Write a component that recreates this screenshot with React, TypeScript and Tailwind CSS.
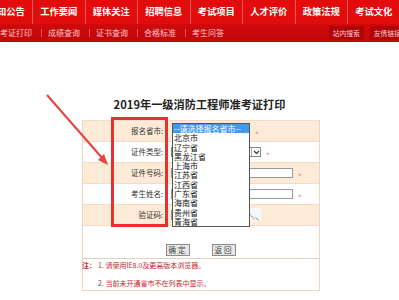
import React from 'react';

const mainNav = ['通知公告', '工作要闻', '媒体关注', '招聘信息', '考试项目', '人才评价', '政策法规', '考试文化'];
const subNav = ['准考证打印', '成绩查询', '证书查询', '合格标准', '考生问答'];
const provinces = ['北京市', '辽宁省', '黑龙江省', '上海市', '江苏省', '江西省', '广东省', '海南省', '贵州省', '青海省'];

const cjk = { fontFamily: '"Noto Sans CJK SC", "Noto Sans", sans-serif' };

function Star() {
  return <span className="text-[8px] leading-none text-[#e8707a]">*</span>;
}

function Row({ label, tone, children }: { label: string; tone: 'peach' | 'white'; children?: React.ReactNode }) {
  return (
    <div
      className={`flex h-[21px] items-center border-b border-[#f0dcc8] ${tone === 'peach' ? 'bg-[#fdebd8]' : 'bg-white'}`}
    >
      <div className="w-[88px] shrink-0 pr-[8px] text-right text-[7.5px] text-[#333]">{label}</div>
      <div className="flex items-center">{children}</div>
    </div>
  );
}

export default function App() {
  return (
    <div className="h-[300px] w-[399px] overflow-hidden bg-white" style={cjk}>
      {/* top nav */}
      <div className="flex h-[24px] items-center overflow-hidden bg-[#e20c0c]">
        <div className="ml-[-19.5px] flex">
          {mainNav.map((item) => (
            <div
              key={item}
              className="flex h-[24px] w-[52.5px] shrink-0 items-center justify-center border-r border-[#f2595a] text-[9.3px] font-bold text-white"
            >
              {item}
            </div>
          ))}
        </div>
      </div>
      <div className="flex h-[18px] items-center justify-between overflow-hidden bg-gradient-to-b from-[#d00a0c] to-[#c2070a]">
        <div className="ml-[-8px] flex items-center text-[8px] text-[#f6c9c9]">
          {subNav.map((item, i) => (
            <React.Fragment key={item}>
              {i > 0 && <span className="ml-[9px] mr-[6px] h-[8px] w-px bg-[#e2585a]" />}
              <span>{item}</span>
            </React.Fragment>
          ))}
        </div>
        <div className="mr-[-6px] flex gap-[6px] text-[6.8px] text-[#f6c9c9]">
          <span className="bg-[#b10406] px-[4px] py-[2px]">站内搜索</span>
          <span className="bg-[#b10406] px-[4px] py-[2px]">友情链接</span>
        </div>
      </div>

      {/* title */}
      <h1 className="mt-[55px] text-center text-[11.2px] font-bold leading-[14px] text-[#222]">
        2019年一级消防工程师准考证打印
      </h1>

      {/* form */}
      <div className="relative ml-[82px] mt-[9px] w-[238px] border-x border-b border-[#ecd6c2]">
        <div className="border-t border-[#f0dcc8]">
          <Row label="报名省市:" tone="peach">
            <div className="h-[10px] w-[77px]" />
            <span className="ml-[7px]">
              <Star />
            </span>
          </Row>
          <Row label="证件类型:" tone="white">
            <div className="flex h-[10px] w-[90px] items-center justify-end border border-[#888] bg-white">
              <div className="flex h-full w-[9px] items-center justify-center border-l border-[#aaa]">
                <svg width="7" height="5" viewBox="0 0 7 5">
                  <path d="M1 1l2.5 2.5L6 1" fill="none" stroke="#333" strokeWidth="1.2" />
                </svg>
              </div>
            </div>
            <span className="ml-[5px]">
              <Star />
            </span>
          </Row>
          <Row label="证件号码:" tone="peach">
            <div className="h-[10px] w-[122px] border border-[#999] bg-white" />
            <span className="ml-[5px]">
              <Star />
            </span>
          </Row>
          <Row label="考生姓名:" tone="white">
            <div className="h-[10px] w-[122px] border border-[#999] bg-white" />
            <span className="ml-[5px]">
              <Star />
            </span>
          </Row>
          <Row label="验证码:" tone="peach">
            <div className="h-[10px] w-[74px] border border-[#999] bg-white" />
            <div className="ml-[3px] h-[14px] w-[13px] bg-[#f7f7f7]">
              <svg width="13" height="14" viewBox="0 0 13 14">
                <path d="M1 5l3 4M4 8l2 4M7 9l3 3M9 10l2 3" stroke="#9a9a9a" strokeWidth="0.8" fill="none" />
              </svg>
            </div>
          </Row>
        </div>

        {/* buttons */}
        <div className="flex h-[32px] justify-center gap-[22px] bg-white pt-[18px]">
          <button className="h-[12px] w-[24px] border border-[#8a8a8a] bg-[#e6e6e6] text-[7.5px] leading-none tracking-[2px] text-[#444]">
            确定
          </button>
          <button className="h-[12px] w-[24px] border border-[#8a8a8a] bg-[#e6e6e6] text-[7.5px] leading-none tracking-[2px] text-[#444]">
            返回
          </button>
        </div>

        {/* notes */}
        <div className="border-t border-[#e2d0c2] pb-[1px] text-[7px] text-[#c4262e]">
          <div className="flex h-[12px] items-center">
            <span className="ml-[-1px] w-[16px] font-bold">注：</span>
            <span>1. 请使用IE8.0及更高版本浏览器。</span>
          </div>
          <div className="mt-[6px] flex h-[12px] items-center pl-[15px]">2. 当前未开通省市不在列表中显示。</div>
        </div>

        {/* open dropdown */}
        <div className="absolute left-[89px] top-[3px] w-[78px] border border-[#555] bg-white text-[8px] leading-[9.3px] text-[#111]">
          <div className="bg-[#3f9bf0] pl-[1px] text-white">--请选择报名省市--</div>
          {provinces.map((p) => (
            <div key={p} className="pl-[1px]">
              {p}
            </div>
          ))}
        </div>

        {/* highlight box */}
        <div className="absolute left-[28px] top-[-3px] h-[110px] w-[57px] border-[3px] border-[#e8302e]" />
      </div>

      {/* arrow */}
      <svg className="absolute left-0 top-0" width="399" height="300" viewBox="0 0 399 300">
        <line x1="47" y1="95" x2="103" y2="159" stroke="#e3453f" strokeWidth="2" />
        <polygon points="108,165 98,160 104,154" fill="#e3453f" />
      </svg>
    </div>
  );
}
